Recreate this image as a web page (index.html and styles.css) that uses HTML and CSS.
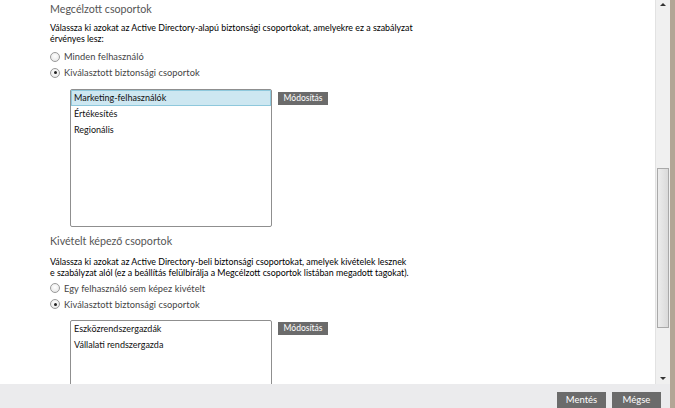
FILE: index.html
```html
<!DOCTYPE html>
<html lang="hu">
<head>
<meta charset="utf-8">
<title>Csoportok</title>
<link rel="stylesheet" href="styles.css">
</head>
<body>
<div class="frame">
  <div class="left">
    <div class="top">
      <div class="content">
        <div class="heading h-first">Megcélzott csoportok</div>
        <div class="desc d-first">Válassza ki azokat az Active Directory-alapú biztonsági csoportokat, amelyekre ez a szabályzat<br>érvényes lesz:</div>
        <div class="radio r-first"><span class="circle"></span><span class="rlabel">Minden felhasználó</span></div>
        <div class="radio"><span class="circle on"></span><span class="rlabel">Kiválasztott biztonsági csoportok</span></div>
        <div class="listrow">
          <div class="listbox lb-first">
            <div class="item sel">Marketing-felhasználók</div>
            <div class="item">Értékesítés</div>
            <div class="item">Regionális</div>
          </div>
          <div class="btn small">Módosítás</div>
        </div>
        <div class="heading h-second">Kivételt képező csoportok</div>
        <div class="desc d-second">Válassza ki azokat az Active Directory-beli biztonsági csoportokat, amelyek kivételek lesznek<br>e szabályzat alól (ez a beállítás felülbírálja a Megcélzott csoportok listában megadott tagokat).</div>
        <div class="radio r-second"><span class="circle"></span><span class="rlabel">Egy felhasználó sem képez kivételt</span></div>
        <div class="radio"><span class="circle on"></span><span class="rlabel">Kiválasztott biztonsági csoportok</span></div>
        <div class="listrow lr-second">
          <div class="listbox lb-second">
            <div class="item">Eszközrendszergazdák</div>
            <div class="item">Vállalati rendszergazda</div>
          </div>
          <div class="btn small">Módosítás</div>
        </div>
      </div>
      <div class="scrollbar">
        <div class="arrow up"></div>
        <div class="track"><div class="thumb"></div></div>
        <div class="arrow down"></div>
      </div>
    </div>
    <div class="footer">
      <div class="btn big">Mentés</div>
      <div class="btn big">Mégse</div>
    </div>
  </div>
  <div class="edge"></div>
</div>
</body>
</html>
```
FILE: styles.css
```css
html, body { margin: 0; padding: 0; }
body { width: 675px; height: 408px; overflow: hidden; background: #fff; font-family: Lato, "Open Sans", sans-serif; color: #000; }
.frame { display: flex; width: 675px; height: 408px; }
.left { width: 670px; display: flex; flex-direction: column; }
.top { height: 384px; display: flex; }
.content { width: 655px; height: 384px; overflow: hidden; padding-left: 50px; box-sizing: border-box; }
.heading { font-size: 10.7px; line-height: 14px; height: 14px; color: #555; white-space: nowrap; }
.h-first { margin-top: 1.5px; }
.h-second { margin-top: 7.5px; }
.desc { font-size: 8.85px; line-height: 11px; color: #000; white-space: nowrap; }
.d-first { margin-top: 6px; }
.d-second { margin-top: 8px; }
.radio { display: flex; align-items: center; height: 16px; }
.r-first { margin-top: 5px; }
.r-second { margin-top: 2px; }
.circle { width: 10px; height: 10px; box-sizing: border-box; border-radius: 50%; border: 1px solid #9a9a9a; background: radial-gradient(circle at 50% 40%, #fff 0%, #eee 60%, #dcdcdc 100%); margin-right: 4px; position: relative; flex: none; }
.circle.on::after { content: ""; position: absolute; left: 2.5px; top: 2.5px; width: 3px; height: 3px; border-radius: 50%; background: #222; }
.rlabel { font-size: 9.25px; color: #444; white-space: nowrap; letter-spacing: 0.05px; }
.listrow { display: flex; align-items: flex-start; margin-top: 8px; padding-left: 20px; }
.lr-second { margin-top: 8px; }
.listbox { width: 202px; box-sizing: border-box; border: 1px solid #8f8f8f; border-radius: 2px; background: #fff; flex: none; }
.lb-first { height: 138px; }
.lb-second { height: 80px; }
.item { height: 16px; line-height: 14px; box-sizing: border-box; border: 1px solid transparent; padding-left: 2px; font-size: 9px; color: #111; white-space: nowrap; }
.item.sel { background: #cde7f1; border-color: #8ec8dc; }
.btn { background: #6b6b6b; color: #fff; text-align: center; white-space: nowrap; }
.btn.small { width: 50px; height: 13px; line-height: 13px; font-size: 8.5px; margin-left: 6px; margin-top: 3px; }
.lr-second .btn.small { margin-top: 2px; }
.footer { height: 24px; background: #ebebed; display: flex; justify-content: flex-end; align-items: flex-start; gap: 6px; padding: 8px 9px 0 0; box-sizing: border-box; }
.btn.big { width: 49px; height: 16px; line-height: 16px; font-size: 9.5px; }
.scrollbar { width: 15px; height: 384px; background: #f0f0f0; border-left: 1px solid #e2e2e2; box-sizing: border-box; display: flex; flex-direction: column; align-items: center; }
.arrow { height: 12px; width: 14px; position: relative; flex: none; }
.arrow::after { content: ""; position: absolute; left: 4px; border-left: 3px solid transparent; border-right: 3px solid transparent; }
.arrow.up::after { top: 3px; border-bottom: 3px solid #333; }
.arrow.down::after { top: 5px; border-top: 3px solid #333; }
.track { flex: 1; width: 100%; padding-top: 156px; box-sizing: border-box; display: flex; justify-content: center; }
.thumb { width: 12px; height: 160px; box-sizing: border-box; border: 1px solid #a9a9a9; background: linear-gradient(to right, #ececec, #dadada); }
.edge { width: 5px; height: 408px; background: #b3a696; }
```
